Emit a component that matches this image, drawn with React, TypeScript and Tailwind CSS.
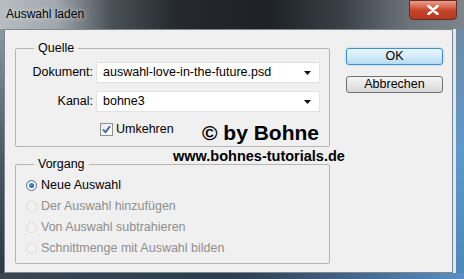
import React from "react";

const font = { fontFamily: '"Liberation Sans", Arial, sans-serif' };

function Dropdown({ value }: { value: string }) {
  return (
    <div className="w-[224px] h-[21px] bg-white border border-[#e2e2e2] flex items-center pl-[6px] pr-[8px] justify-between">
      <span className="text-[12.5px] text-black leading-none">{value}</span>
      <svg width="7" height="4" viewBox="0 0 7 4">
        <path d="M0 0 L7 0 L3.5 4 Z" fill="#111" />
      </svg>
    </div>
  );
}

function Radio({ checked, label }: { checked?: boolean; label: string }) {
  return (
    <div className="h-[21px] flex items-center">
      {checked ? (
        <div className="w-[11px] h-[11px] rounded-full border border-[#5b6d80] bg-gradient-to-b from-[#dfe8f1] to-[#ffffff] flex items-center justify-center">
          <div className="w-[5px] h-[5px] rounded-full bg-gradient-to-br from-[#4aa3e6] to-[#1b5aa0]" />
        </div>
      ) : (
        <div className="w-[11px] h-[11px] rounded-full border border-[#dcdcdc] bg-[#f2f2f2]" />
      )}
      <span className={`ml-[4px] text-[12.5px] leading-none ${checked ? "text-black" : "text-[#8e8e8e]"}`}>{label}</span>
    </div>
  );
}

export default function App() {
  return (
    <div className="w-[464px] h-[279px] flex flex-col overflow-hidden bg-[#2d3a46]" style={font}>
      {/* Title bar */}
      <div className="h-[29px] flex items-start relative bg-[linear-gradient(to_right,#b7bdc2_0%,#a0a7ad_12%,#4a5158_24%,#25292e_38%,#1e2226_58%,#3b4148_74%,#6c747b_88%,#7d858c_100%)]">
        <span className="mt-[8px] ml-[6px] text-[12px] leading-none text-black [text-shadow:0_0_6px_rgba(255,255,255,0.8)]">Auswahl laden</span>
        <div className="absolute left-[409px] top-0 w-[48px] h-[20px] rounded-b-[4px] border border-[#6b2a20] bg-gradient-to-b from-[#e8a08c] via-[#c9442a] to-[#b33a22] flex items-center justify-center">
          <svg width="12" height="10" viewBox="0 0 12 10">
            <path d="M1.5 1 L10.5 9 M10.5 1 L1.5 9" stroke="#fff" strokeWidth="2.6" strokeLinecap="round" />
          </svg>
        </div>
      </div>
      <div className="flex flex-1">
        <div className="w-[4px] bg-gradient-to-b from-[#8d979f] via-[#4b5b68] to-[#2b3946]" />
        {/* Client area */}
        <div className="w-[449px] bg-[#f0f0f0] border border-[#7c8790] relative flex pl-[10px] pt-[18px]">
          <div className="w-[315px] flex flex-col">
            {/* Quelle */}
            <div className="relative h-[99px] border border-[#b5b5b5] rounded-[2px] pt-[13px]">
              <span className="absolute -top-[8px] left-[18px] px-[4px] bg-[#f0f0f0] text-[12.5px] leading-[14px] text-black">Quelle</span>
              <div className="flex items-center">
                <span className="w-[77px] text-right text-[12.5px] text-black">Dokument:</span>
                <div className="ml-[3px]"><Dropdown value="auswahl-love-in-the-future.psd" /></div>
              </div>
              <div className="flex items-center mt-[8px]">
                <span className="w-[77px] text-right text-[12.5px] text-black">Kanal:</span>
                <div className="ml-[3px]"><Dropdown value="bohne3" /></div>
              </div>
              <div className="flex items-center mt-[11px] ml-[84px]">
                <div className="w-[13px] h-[13px] border border-[#8f8f8f] bg-gradient-to-br from-[#e4e9ef] to-[#ffffff] flex items-center justify-center">
                  <svg width="9" height="9" viewBox="0 0 9 9">
                    <path d="M1 4.5 L3.5 7.2 L8 1.2" stroke="#3a5f99" strokeWidth="1.8" fill="none" />
                  </svg>
                </div>
                <span className="ml-[3px] text-[12.5px] leading-none text-black">Umkehren</span>
              </div>
            </div>
            {/* Vorgang */}
            <div className="relative h-[100px] mt-[17px] border border-[#b5b5b5] rounded-[2px] pt-[10px] pl-[10px]">
              <span className="absolute -top-[8px] left-[18px] px-[4px] bg-[#f0f0f0] text-[12.5px] leading-[14px] text-black">Vorgang</span>
              <Radio checked label="Neue Auswahl" />
              <Radio label="Der Auswahl hinzufügen" />
              <Radio label="Von Auswahl subtrahieren" />
              <Radio label="Schnittmenge mit Auswahl bilden" />
            </div>
          </div>
          {/* Buttons */}
          <div className="ml-[16px] flex flex-col gap-[11px]">
            <button className="w-[97px] h-[17px] rounded-[3px] border border-[#3c8fd0] bg-gradient-to-b from-[#e8f5fd] via-[#d3ebf9] to-[#b6dcf3] shadow-[0_0_2px_#7fc4ef] text-[12.5px] leading-none text-black">OK</button>
            <button className="w-[97px] h-[17px] rounded-[3px] border border-[#707070] bg-gradient-to-b from-[#f4f4f4] via-[#e8e8e8] to-[#d6d6d6] text-[12.5px] leading-none text-black">Abbrechen</button>
          </div>
          {/* Watermark */}
          <span className="absolute left-[197px] top-[92px] text-[21px] font-bold leading-none text-black whitespace-nowrap">© by Bohne</span>
          <span className="absolute left-[168px] top-[119px] text-[14.5px] font-bold leading-none text-black whitespace-nowrap">www.bohnes-tutorials.de</span>
        </div>
        <div className="w-[11px] flex">
          <div className="w-[3px] bg-[#dfe8f0]" />
          <div className="flex-1 bg-gradient-to-b from-[#6f8aa0] via-[#5f98cc] to-[#4f86bb]" />
        </div>
      </div>
      <div className="h-[6px] bg-gradient-to-r from-[#3a4650] via-[#2c3d50] to-[#5a90c4]" />
    </div>
  );
}
